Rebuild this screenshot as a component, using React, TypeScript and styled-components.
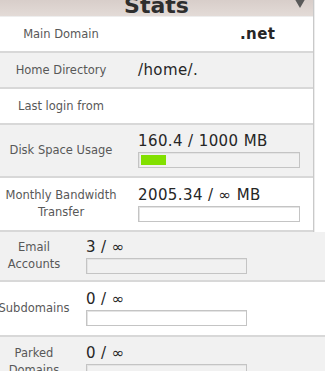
import styled, { createGlobalStyle } from 'styled-components';

const GlobalStyle = createGlobalStyle`
  html, body {
    margin: 0;
    padding: 0;
    background: #fff;
  }
  body {
    font-family: 'DejaVu Sans', Verdana, sans-serif;
  }
`;

const Screen = styled.div`
  width: 325px;
  height: 371px;
  overflow: hidden;
  background: #fff;
`;

const StatsPanel = styled.section`
  width: 314px;
  margin-top: -8px;
  box-sizing: border-box;
  border-right: 1px solid #c9c9c9;
  box-shadow: 1px 0 0 #ececec;
`;

const PanelHeader = styled.header`
  display: grid;
  grid-template-columns: 1fr auto 1fr;
  height: 25px;
  box-sizing: border-box;
  background: linear-gradient(to bottom, #d2c7c3, #e3dbd7);
  border-bottom: 1px solid #eeeeee;
  overflow: hidden;
`;

const HeaderTitle = styled.h2`
  grid-column: 2;
  margin: 0;
  font-size: 22px;
  line-height: 27px;
  font-weight: bold;
  color: #2e2e2e;
`;

const CollapseArrow = styled.span`
  grid-column: 3;
  justify-self: end;
  margin: 4px 6px 0 0;
  width: 0;
  height: 0;
  border-left: 7px solid transparent;
  border-right: 7px solid transparent;
  border-top: 12px solid #595959;
`;

const StatRow = styled.div<{ $h: number; $shade?: boolean; $label: number; $gap: number }>`
  display: grid;
  grid-template-columns: ${(p) => p.$label}px 1fr;
  column-gap: ${(p) => p.$gap}px;
  align-items: center;
  height: ${(p) => p.$h}px;
  box-sizing: border-box;
  background: ${(p) => (p.$shade ? '#f1f1f1' : '#ffffff')};
  border-bottom: 2px solid #d8d8d8;
`;

const StatLabel = styled.div`
  text-align: center;
  font-size: 11.5px;
  line-height: 17px;
  color: #585858;
`;

const StatValue = styled.div`
  display: flex;
  flex-direction: column;
  align-items: flex-start;
`;

const ValueText = styled.div<{ $bold?: boolean }>`
  display: flex;
  align-items: baseline;
  font-size: 15px;
  line-height: 16px;
  letter-spacing: 0.4px;
  font-weight: ${(p) => (p.$bold ? 'bold' : 'normal')};
  color: #262626;
  white-space: nowrap;
`;

const Redacted = styled.span<{ $w: number }>`
  display: inline-block;
  width: ${(p) => p.$w}px;
`;

const UsageBar = styled.div<{ $w: number }>`
  width: ${(p) => p.$w}px;
  height: 16px;
  margin-top: 3px;
  box-sizing: border-box;
  border: 1px solid #c4c4c4;
  box-shadow: inset 1px 1px 0 #e4e4e4;
  padding: 2px;
`;

const UsageFill = styled.div`
  height: 100%;
  background: #82e000;
`;

const LowerPanel = styled.section`
  margin-left: -4px;
  width: calc(100% + 4px);
`;

type Usage = { label: string; value: string; pct?: number; h: number; shade?: boolean };

const upperUsage: Usage[] = [
  { label: 'Disk Space Usage', value: '160.4 / 1000 MB', pct: 16.04, h: 53, shade: true },
  { label: 'Monthly Bandwidth Transfer', value: '2005.34 / ∞ MB', h: 54 },
];

const lowerUsage: Usage[] = [
  { label: 'Email Accounts', value: '3 / ∞', h: 50, shade: true },
  { label: 'Subdomains', value: '0 / ∞', h: 55 },
  { label: 'Parked Domains', value: '0 / ∞', h: 52, shade: true },
];

const UsageValue = ({ value, pct, bar }: { value: string; pct?: number; bar: number }) => (
  <StatValue>
    <ValueText>{value}</ValueText>
    <UsageBar $w={bar}>{pct ? <UsageFill style={{ width: `${pct}%` }} /> : null}</UsageBar>
  </StatValue>
);

const App = () => {
  return (
    <Screen>
      <GlobalStyle />
      <StatsPanel>
        <PanelHeader>
          <HeaderTitle>Stats</HeaderTitle>
          <CollapseArrow />
        </PanelHeader>
        <StatRow $h={36} $label={122} $gap={16}>
          <StatLabel>Main Domain</StatLabel>
          <ValueText $bold>
            <Redacted $w={102} />
            .net
          </ValueText>
        </StatRow>
        <StatRow $h={36} $label={122} $gap={16} $shade>
          <StatLabel>Home Directory</StatLabel>
          <ValueText>
            /home/.
            <Redacted $w={90} />
          </ValueText>
        </StatRow>
        <StatRow $h={36} $label={122} $gap={16}>
          <StatLabel>Last login from</StatLabel>
          <ValueText />
        </StatRow>
        {upperUsage.map((u) => (
          <StatRow key={u.label} $h={u.h} $label={122} $gap={16} $shade={u.shade}>
            <StatLabel>{u.label}</StatLabel>
            <UsageValue value={u.value} pct={u.pct} bar={162} />
          </StatRow>
        ))}
      </StatsPanel>
      <LowerPanel>
        {lowerUsage.map((u) => (
          <StatRow key={u.label} $h={u.h} $label={76} $gap={14} $shade={u.shade}>
            <StatLabel>{u.label}</StatLabel>
            <UsageValue value={u.value} bar={161} />
          </StatRow>
        ))}
      </LowerPanel>
    </Screen>
  );
};

export default App;
